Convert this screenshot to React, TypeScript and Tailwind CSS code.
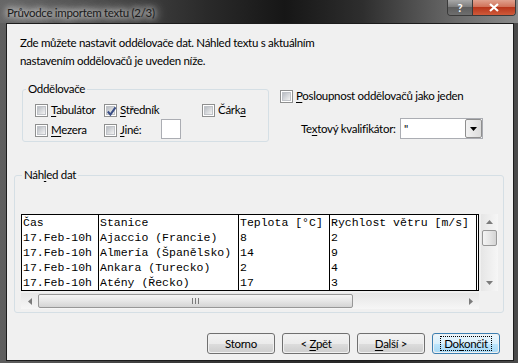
import React from 'react';

const ui = "font-['Lato','Liberation_Sans',sans-serif] text-[11.5px] tracking-[-0.3px] leading-[16px] text-black";

const U: React.FC<{ c: string }> = ({ c }) => <span className="underline underline-offset-[2px]">{c}</span>;

const CheckBox: React.FC<{ checked?: boolean }> = ({ checked }) => (
  <span className="w-[13px] h-[13px] shrink-0 border border-[#8e8f8f] bg-white p-px">
    <span className="relative block w-full h-full border border-[#c0c3c8] bg-gradient-to-br from-[#b9bdc3] to-[#f3f3f3]">
      {checked && (
        <svg viewBox="0 0 9 9" className="absolute -left-px -top-px w-[11px] h-[11px]">
          <path d="M1.5 4.5 L3.6 7 L7.8 1.2" fill="none" stroke="#3b4f86" strokeWidth="1.7" />
        </svg>
      )}
    </span>
  </span>
);

const Option: React.FC<{ checked?: boolean; children: React.ReactNode; className?: string }> = ({ checked, children, className }) => (
  <div className={`flex items-center gap-[3px] ${className ?? ''}`}>
    <CheckBox checked={checked} />
    <span>{children}</span>
  </div>
);

const Button: React.FC<{ children: React.ReactNode; focused?: boolean }> = ({ children, focused }) => (
  <div
    className={`w-[68px] h-[21px] rounded-[3px] border p-px ${focused ? 'border-[#3c7fb1]' : 'border-[#707070]'}`}
  >
    <div
      className={`w-full h-full rounded-[2px] flex items-center justify-center font-normal ${
        focused
          ? 'bg-[linear-gradient(#eaf6fd_0%,#d9f0fc_50%,#bee6fd_50%,#a7d9f5_100%)]'
          : 'bg-[linear-gradient(#f2f2f2_0%,#ebebeb_50%,#dddddd_50%,#cfcfcf_100%)]'
      }`}
    >
      <span className={focused ? 'border border-dotted border-black px-[3px] leading-[13px]' : ''}>{children}</span>
    </div>
  </div>
);

const Arrow: React.FC<{ dir: 'up' | 'down' | 'left' | 'right' }> = ({ dir }) => {
  const d = {
    up: 'M0 4 L3.5 0 L7 4 Z',
    down: 'M0 0 L7 0 L3.5 4 Z',
    left: 'M4 0 L4 7 L0 3.5 Z',
    right: 'M0 0 L4 3.5 L0 7 Z',
  }[dir];
  const vert = dir === 'up' || dir === 'down';
  return (
    <svg viewBox={vert ? '0 0 7 4' : '0 0 4 7'} className={vert ? 'w-[7px] h-[4px]' : 'w-[4px] h-[7px]'}>
      <path d={d} fill="#7b7b7b" />
    </svg>
  );
};

const rows = [
  ['Čas', 'Stanice', 'Teplota [°C]', 'Rychlost větru [m/s]'],
  ['17.Feb-10h', 'Ajaccio (Francie)', '8', '2'],
  ['17.Feb-10h', 'Almería (Španělsko)', '14', '9'],
  ['17.Feb-10h', 'Ankara (Turecko)', '2', '4'],
  ['17.Feb-10h', 'Atény (Řecko)', '17', '3'],
];

const colClasses = ['w-[77px] border-r', 'w-[140px] border-r', 'w-[91px] border-r', 'w-[147px] border-r mr-px'];

export default function App() {
  return (
    <div className={`w-[518px] h-[363px] flex flex-col bg-[linear-gradient(90deg,#5e5e5e,#3c3c3c_30%,#262626_70%,#4a4a4a)] ${ui}`}>
      {/* title bar */}
      <div className="h-[23px] shrink-0 flex items-start justify-between bg-[linear-gradient(90deg,#666666_0%,#4a4a4a_20%,#2a2a2a_40%,#161616_55%,#2e2e2e_70%,#6a6a6a_88%,#8a8a8a_100%)]">
        <div className="pl-[7px] pt-[5px] text-[11.5px] leading-[16px] text-[#1a1a1a] [text-shadow:0_0_6px_#ffffff,0_0_10px_#e8e8e8,0_0_16px_#d0d0d0]">
          Průvodce importem textu (2/3)
        </div>
        <div className="flex mr-[2px] h-[16px] border border-t-0 border-[#3a3a3a] rounded-b-[4px] overflow-hidden">
          <div className="w-[25px] flex items-center justify-center border-r border-[#3a3a3a] bg-[linear-gradient(#a8a8a8,#7a7a7a_50%,#5e5e5e_50%,#6e6e6e)] text-white text-[11px] font-bold">
            ?
          </div>
          <div className="w-[42px] flex items-center justify-center bg-[linear-gradient(#e0a18e,#cf6d54_50%,#b8361b_50%,#cf5a3a)]">
            <svg viewBox="0 0 10 9" className="w-[10px] h-[9px]">
              <path d="M1 1 L9 8 M9 1 L1 8" stroke="#ffffff" strokeWidth="2.2" />
            </svg>
          </div>
        </div>
      </div>

      {/* client area */}
      <div className="ml-[6px] mr-[4px] mb-[2px] h-[338px] border border-[#1c1c1c] bg-[#f0f0f0] flex flex-col">
        <p className="pt-[10px] pl-[13px] leading-[18px]">
          Zde můžete nastavit oddělovače dat. Náhled textu s aktuálním
          <br />
          nastavením oddělovačů je uveden níže.
        </p>

        <div className="flex">
          <fieldset className="ml-[15px] mt-[11px] w-[247px] h-[61px] border border-[#d5dfe5] rounded-[3px]">
            <legend className="ml-[3px] px-[2px] leading-[16px]">Oddělovače</legend>
            <div className="pl-[12px] pt-[5px]">
              <div className="flex h-[16px]">
                <Option className="w-[69px]">
                  <U c="T" />abulátor
                </Option>
                <Option checked className="w-[98px]">
                  <U c="S" />tředník
                </Option>
                <Option>
                  Čárk<U c="a" />
                </Option>
              </div>
              <div className="flex h-[20px] mt-[2px] items-center">
                <Option className="w-[69px]">
                  <U c="M" />ezera
                </Option>
                <Option className="w-[57px]">
                  <U c="J" />iné:
                </Option>
                <div className="w-[20px] h-[20px] bg-white border border-[#abadb3] -mt-[3px]" />
              </div>
            </div>
          </fieldset>

          <div className="ml-[11px] pt-[18px]">
            <Option>
              <U c="P" />osloupnost oddělovačů jako jeden
            </Option>
            <div className="flex items-center mt-[14px] pl-[21px]">
              <span className="w-[99px]">
                Te<U c="x" />tový kvalifikátor:
              </span>
              <div className="w-[83px] h-[21px] bg-white border border-[#abadb3] flex">
                <span className="flex-1 pl-[3px] leading-[19px]">"</span>
                <div className="w-[17px] border border-[#8f8f8f] rounded-[2px] bg-[linear-gradient(90deg,#f2f2f2,#dcdcdc)] flex items-center justify-center">
                  <svg viewBox="0 0 7 4" className="w-[7px] h-[4px]">
                    <path d="M0 0 L7 0 L3.5 4 Z" fill="#000" />
                  </svg>
                </div>
              </div>
            </div>
          </div>
        </div>

        <fieldset className="ml-[7px] mt-[25px] w-[490px] border border-[#d5dfe5] rounded-[3px] pl-[6px] pt-[31px] pb-[3px]">
          <legend className="ml-[1px] px-[2px] leading-[16px]">
            Náh<U c="l" />ed dat
          </legend>
          <div className="flex">
            <div className="flex h-[77px] border border-black bg-white font-['Liberation_Mono','Courier_New',monospace] text-[11.5px] tracking-normal leading-[15px] overflow-hidden">
              {colClasses.map((cls, ci) => (
                <div key={ci} className={`${cls} border-black overflow-hidden whitespace-pre`}>
                  {rows.map((r, ri) => (
                    <div key={ri} className="h-[15px] pl-px">
                      {r[ci]}
                    </div>
                  ))}
                </div>
              ))}
            </div>
            <div className="ml-[2px] w-[17px] h-[77px] bg-[linear-gradient(90deg,#e6e6e6,#f6f6f6)] flex flex-col items-center">
              <div className="h-[16px] flex items-center">
                <Arrow dir="up" />
              </div>
              <div className="w-[15px] h-[16px] border border-[#979797] rounded-[2px] bg-[linear-gradient(90deg,#f4f4f4,#e6e6e6_50%,#d4d4d4)]" />
              <div className="flex-1" />
              <div className="h-[16px] flex items-center">
                <Arrow dir="down" />
              </div>
            </div>
          </div>
          <div className="mt-[2px] w-[458px] h-[16px] bg-[linear-gradient(#e6e6e6,#f6f6f6)] flex items-center">
            <div className="w-[17px] flex justify-center">
              <Arrow dir="left" />
            </div>
            <div className="w-[315px] h-[14px] border border-[#979797] rounded-[2px] bg-[linear-gradient(#f4f4f4,#e6e6e6_50%,#d4d4d4)] flex items-center justify-center">
              <svg viewBox="0 0 7 6" className="w-[7px] h-[6px]">
                <path d="M0.5 0 V6 M3.5 0 V6 M6.5 0 V6" stroke="#7a7a7a" strokeWidth="1" />
              </svg>
            </div>
            <div className="flex-1" />
            <div className="w-[17px] flex justify-center">
              <Arrow dir="right" />
            </div>
          </div>
        </fieldset>

        <div className="mt-[20px] pr-[13px] flex justify-end gap-[7px]">
          <Button>Storno</Button>
          <Button>
            &lt; <U c="Z" />pět
          </Button>
          <Button>
            <U c="D" />alší &gt;
          </Button>
          <Button focused>
            Do<U c="k" />ončit
          </Button>
        </div>
      </div>
    </div>
  );
}
